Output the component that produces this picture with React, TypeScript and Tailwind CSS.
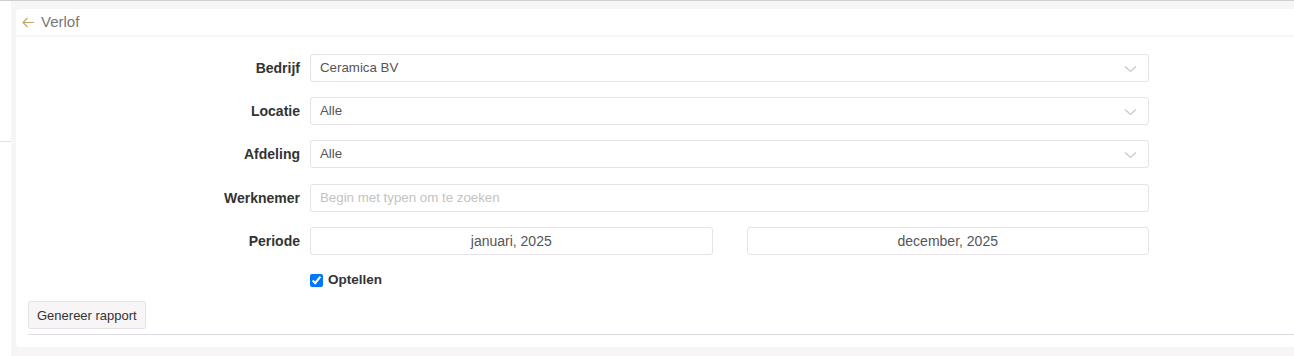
import React from "react";

const font = { fontFamily: '"Liberation Sans", Arial, sans-serif' };

function Chevron() {
  return (
    <svg width="13" height="8" viewBox="0 0 13 8" className="absolute right-[11px] top-[10px]">
      <path d="M1 1.5 L6.5 6.5 L12 1.5" fill="none" stroke="#c9c5d0" strokeWidth="1.2" />
    </svg>
  );
}

function SelectBox({ value }: { value: string }) {
  return (
    <div className="relative flex h-[28px] items-center rounded-[3px] border border-[#e6e1e6] bg-white pl-[9px] text-[13.3px] text-[#555]">
      {value}
      <Chevron />
    </div>
  );
}

function Row({ label, className, children }: { label: string; className?: string; children: React.ReactNode }) {
  return (
    <div className={"flex items-center " + (className ?? "")}>
      <div className="w-[294px] pr-[10px] text-right text-[14px] font-bold text-[#333]">{label}</div>
      <div className="w-[839px]">{children}</div>
    </div>
  );
}

export default function App() {
  return (
    <div style={font} className="flex h-[356px] w-[1294px] overflow-hidden border-t border-[#cfcfcf] bg-[#f7f5f5]">
      <div className="w-[11px] shrink-0 bg-white">
        <div className="mt-[140px] h-px bg-[#e4e2e4]" />
      </div>
      <div className="ml-[5px] mt-[8px] flex h-[338px] flex-1 flex-col rounded-l-[4px] bg-white">
        <div className="flex h-[28px] items-center border-b-2 border-[#f7f5f5] pl-[6px]">
          <svg width="13" height="11" viewBox="0 0 13 11" className="mr-[6px]">
            <path d="M12 5.5 H1.5 M5.5 1 L1 5.5 L5.5 10" fill="none" stroke="#c4a462" strokeWidth="1.1" />
          </svg>
          <span className="text-[15px] text-[#777]">Verlof</span>
        </div>
        <div className="flex flex-col gap-[15px] pt-[17px]">
          <Row label="Bedrijf">
            <SelectBox value="Ceramica BV" />
          </Row>
          <Row label="Locatie">
            <SelectBox value="Alle" />
          </Row>
          <Row label="Afdeling">
            <SelectBox value="Alle" />
          </Row>
          <Row label="Werknemer" className="mt-px">
            <div className="flex h-[28px] items-center rounded-[3px] border border-[#e6e1e6] bg-white pl-[9px] text-[13.3px] text-[#c3c3c3]">
              Begin met typen om te zoeken
            </div>
          </Row>
          <Row label="Periode">
            <div className="grid grid-cols-2 gap-[34px]">
              <div className="flex h-[28px] items-center justify-center rounded-[3px] border border-[#e6e1e6] text-[14px] text-[#555]">
                januari, 2025
              </div>
              <div className="flex h-[28px] items-center justify-center rounded-[3px] border border-[#e6e1e6] text-[14px] text-[#555]">
                december, 2025
              </div>
            </div>
          </Row>
        </div>
        <div className="ml-[294px] mt-[15px] flex items-center gap-[5px]">
          <input type="checkbox" defaultChecked className="m-0 h-[13px] w-[13px]" />
          <span className="text-[13.5px] font-bold text-[#333]">Optellen</span>
        </div>
        <div className="ml-[12px] mt-[11px] border-b border-[#dddbe3] pb-[5px]">
          <button className="h-[28px] rounded-[2px] border border-[#e6e3e6] bg-[#f7f5f5] px-[8px] text-[13px] text-[#333]">
            Genereer rapport
          </button>
        </div>
      </div>
    </div>
  );
}
